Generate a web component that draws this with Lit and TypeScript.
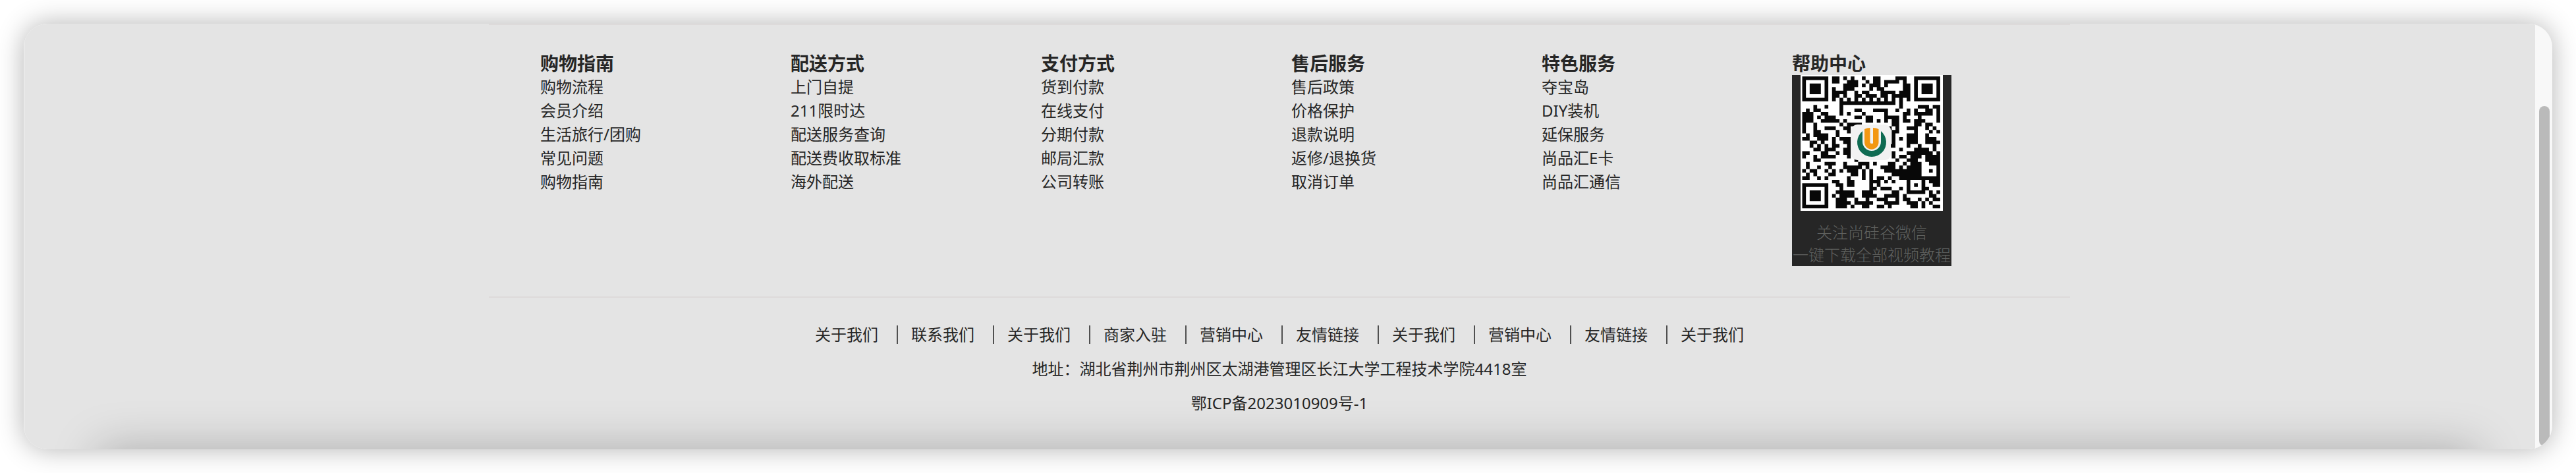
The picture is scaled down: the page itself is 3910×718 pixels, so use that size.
import { LitElement, html, svg, css } from "lit";
import { customElement } from "lit/decorators.js";

interface Group {
  title: string;
  links: string[];
}

const GROUPS: Group[] = [
  { title: "购物指南", links: ["购物流程", "会员介绍", "生活旅行/团购", "常见问题", "购物指南"] },
  { title: "配送方式", links: ["上门自提", "211限时达", "配送服务查询", "配送费收取标准", "海外配送"] },
  { title: "支付方式", links: ["货到付款", "在线支付", "分期付款", "邮局汇款", "公司转账"] },
  { title: "售后服务", links: ["售后政策", "价格保护", "退款说明", "返修/退换货", "取消订单"] },
  { title: "特色服务", links: ["夺宝岛", "DIY装机", "延保服务", "尚品汇E卡", "尚品汇通信"] },
];

const SITE_LINKS = [
  "关于我们", "联系我们", "关于我们", "商家入驻", "营销中心",
  "友情链接", "关于我们", "营销中心", "友情链接", "关于我们",
];

// Dark modules of the code, one entry per row, as column runs.
const QR_ROWS = [
  "0-6 8-9 11 13 16 19-20 25-27 30-36",
  "0 6 8-9 12-14 17 19-20 22-25 27 30 36",
  "0 2-4 6 11-14 16 18-20 22 27-28 30 32-34 36",
  "0 2-4 6 8 11-13 18 20-21 27-28 30 32-34 36",
  "0 2-4 6 8-11 14 16-17 21-24 26-28 30 32-34 36",
  "0 6 8-9 11 14-15 17-19 21-22 24-28 30 36",
  "0-6 8 10 12 14 16 18 20 22 24 26 28 30-36",
  "10-24 26",
  "3 6 10 26 31-33 35-36",
  "1 3-4 10 14-15 19-22 25 28 30 33-34 36",
  "0-2 5-6 10 12 16 22 27-28 30-34 36",
  "0-2 4 6-8 14-15 17-18 22-25 27 31 36",
  "0-2 5-9 11 17-18 20 22 24-25 27-28 30-32 36",
  "0 3 10 12-15 24-25 30-31 33 34",
  "0 3 6-8 11-12 23 25 28-30 33 35",
  "0 3-4 9 12 24-25 30 34 36",
  "1 3-6 9 24 28-30 33",
  "0-1 4-6 8 10-12 24 26 28-30 33-35",
  "2-3 5 8 11-12 24 28-30 33-36",
  "2 4 6 8-9 12 23-24 28 31 35",
  "3-4 6-8 11-12 26 30-33 35",
  "0-1 5-6 9 11-12 24 28-34 36",
  "0 3 5-8 12 24 26 27 29-31 33-36",
  "3-4 14 25 28-30 33-36",
  "1 6-8 11 15-17 19 23-24 27 29-31 34-36",
  "1 4 7 11-15 17 21-24 26 28-31 36",
  "0 2-3 6 8 10 12-14 16 18 22-31 34 36",
  "1 3 7-8 13-14 16 18 24-31 36",
  "0-1 4 6 12 16 18 20-21 23 26-36",
  "8-9 12-13 18-20 22 24 28 32 34-36",
  "0-6 9-10 12-13 18 20 28 30 32 35-36",
  "0 6 10 18-19 21-23 26 28 32-33",
  "0 2-4 6 9-13 16-18 24-25 28-32 34 36",
  "0 2-4 6 8 10-13 16-19 22-25 27 34-35",
  "0 2-4 6 9-11 14 17 20-22 25 27-28 31 33 35-36",
  "0 6 9-12 14-18 22-25 28-30 32 34",
  "0-6 9-11 13 16-17 20-21 23 29-30 32 35-36",
];

const QR_PATH = QR_ROWS.map((row, y) =>
  row
    .split(" ")
    .map((run) => {
      const [from, to = from] = run.split("-").map(Number);
      const width = to - from + 1;
      return `M${from} ${y}h${width}v1h${-width}z`;
    })
    .join(""),
).join("");

@customElement("qr-card")
export class QrCard extends LitElement {
  static styles = css`
    :host {
      display: block;
      box-sizing: border-box;
      width: 242px;
      background: #262626;
    }
    .code {
      display: block;
      width: 216px;
      height: 206px;
      margin: 0 auto;
    }
    .caption {
      margin: 0;
      padding-top: 16px;
      color: #606260;
      font-size: 24px;
      font-weight: 300;
      line-height: 34px;
      text-align: center;
      white-space: nowrap;
    }
  `;

  render() {
    return html`
      <svg class="code" viewBox="0 0 216 206" role="img" aria-label="二维码">
        ${svg`
          <rect width="216" height="206" fill="#fff"></rect>
          <path d=${QR_PATH} transform="translate(2.5 2) scale(5.66 5.41)" fill="#080808"></path>
          <rect x="77" y="75" width="60" height="54" rx="9" fill="#f2f2f2"></rect>
          <path d="M94 85A22 22 0 1 0 122 85V101A14 14 0 0 1 94 101Z" fill="#0f6b52"></path>
          <path d="M97 82Q101 80 105.500 80V102Q105.500 104 108 104T110 102V80Q115 80 118.500 82V102A10.700 10.700 0 0 1 97 102Z" fill="#f39813"></path>
        `}
      </svg>
      <p class="caption">关注尚硅谷微信<br />一键下载全部视频教程</p>
    `;
  }
}

@customElement("app-root")
export class AppRoot extends LitElement {
  static styles = css`
    :host {
      display: block;
      box-sizing: border-box;
      padding: 36px;
      background: #fff;
      color: #262626;
      font-family: "Noto Sans", "Noto Sans CJK SC", sans-serif;
      font-size: 24px;
      line-height: 36px;
    }
    .window {
      display: flex;
      overflow: hidden;
      border-radius: 36px;
      background: #e4e4e4;
    }
    .frame {
      border-radius: 36px;
      box-shadow: 0 0 40px rgba(0, 0, 0, 0.3);
    }
    .viewport {
      position: relative;
      flex: 1;
      overflow: hidden;
      box-shadow: inset 2px 0 #e9e9e9;
    }
    .shade {
      position: absolute;
      top: 100%;
      left: 114px;
      right: 88px;
      height: 120px;
      box-shadow: 0 0 70px rgba(0, 0, 0, 0.25);
    }
    .track {
      display: flex;
      box-sizing: border-box;
      width: 26px;
      padding: 125px 4px 5px 6px;
      background: #f8f8f8;
    }
    .thumb {
      flex: 1;
      border-radius: 8px;
      background: #bababa;
    }
    .footer {
      max-width: 2400px;
      margin: 0 auto;
    }
    .groups {
      display: grid;
      grid-template-columns: repeat(6, 1fr);
      padding: 40px 42px 46px 78px;
      border-top: 2px solid #dddada;
      border-bottom: 2px solid #dddada;
    }
    .title {
      margin: 0;
      font-size: 28px;
      font-weight: 700;
      line-height: 36px;
    }
    .list {
      margin: 0;
      padding: 0;
      list-style: none;
    }
    a {
      color: inherit;
      text-decoration: none;
    }
    .legal {
      display: flex;
      flex-direction: column;
      gap: 16px;
      padding: 38px 0 52px;
      text-align: center;
    }
    .legal p {
      margin: 0;
    }
    .site {
      display: flex;
      flex-wrap: wrap;
      justify-content: center;
      align-items: center;
      gap: 20px;
      margin: 0;
      padding: 4px 0;
      list-style: none;
    }
    .site li {
      padding-right: 28px;
      border-right: 2px solid #505050;
      line-height: 28px;
    }
    .site li:last-child {
      padding-right: 0;
      border-right: 0;
    }
  `;

  render() {
    return html`
      <div class="frame">
        <div class="window">
          <div class="viewport">
            <footer class="footer">
              <div class="groups">
                ${GROUPS.map(
                  (group) => html`
                    <section>
                      <h4 class="title">${group.title}</h4>
                      <ul class="list">
                        ${group.links.map((text) => html`<li><a href="#">${text}</a></li>`)}
                      </ul>
                    </section>
                  `,
                )}
                <section>
                  <h4 class="title">帮助中心</h4>
                  <qr-card></qr-card>
                </section>
              </div>
              <div class="legal">
                <ul class="site">
                  ${SITE_LINKS.map((text) => html`<li><a href="#">${text}</a></li>`)}
                </ul>
                <p>地址：湖北省荆州市荆州区太湖港管理区长江大学工程技术学院4418室</p>
                <p>鄂ICP备2023010909号-1</p>
              </div>
            </footer>
            <div class="shade" aria-hidden="true"></div>
          </div>
          <div class="track" aria-hidden="true"><div class="thumb"></div></div>
        </div>
      </div>
    `;
  }
}
